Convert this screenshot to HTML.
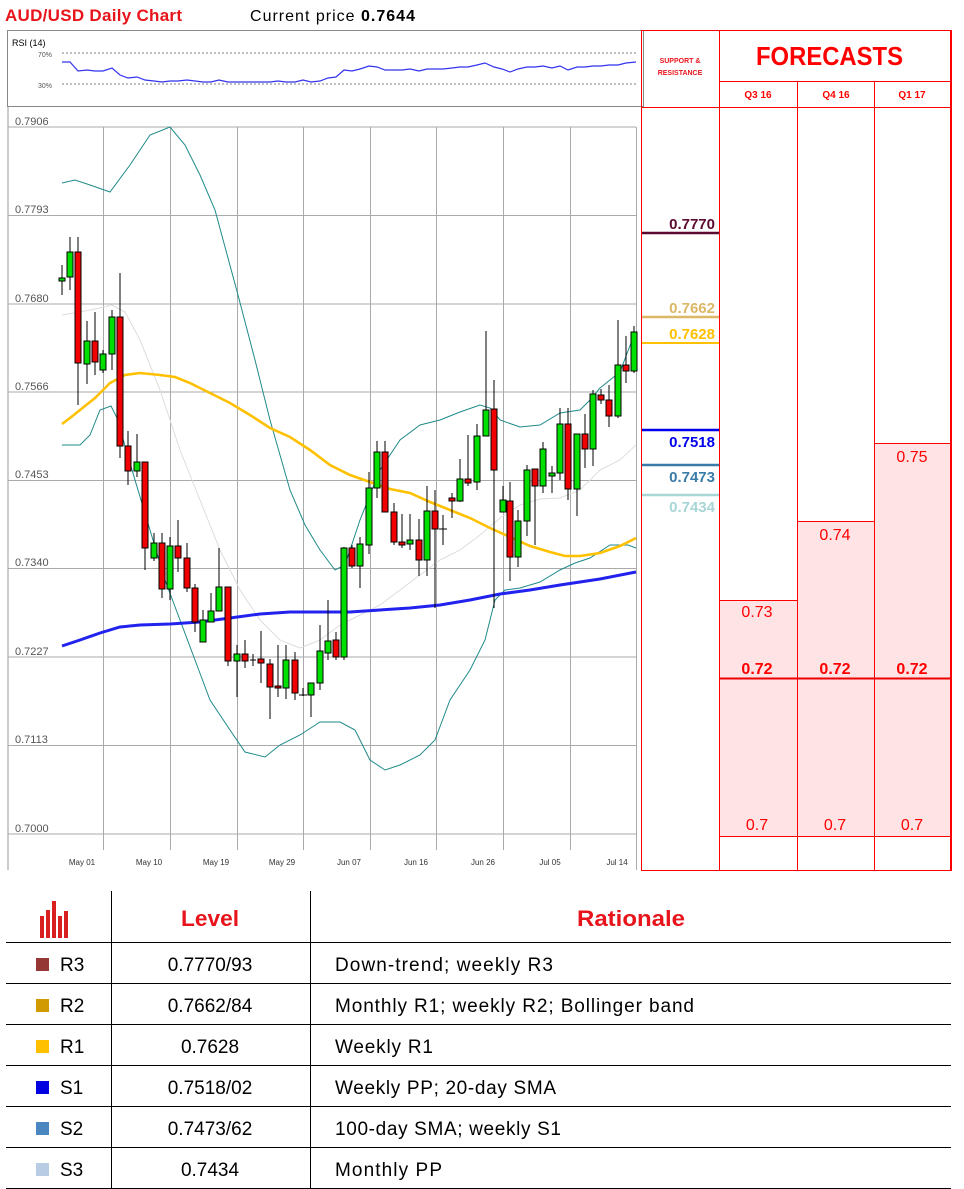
<!DOCTYPE html>
<html><head><meta charset="utf-8"><style>
html,body{margin:0;padding:0;background:#fff;width:964px;height:1189px;overflow:hidden}
svg{display:block}
text{font-family:"Liberation Sans",sans-serif}
</style></head><body>
<svg width="964" height="1189" viewBox="0 0 964 1189" xmlns="http://www.w3.org/2000/svg">
<text x="5" y="21" font-size="17" font-weight="bold" fill="#e8141b" textLength="177">AUD/USD Daily Chart</text>
<text x="250" y="21" font-size="16" fill="#000" textLength="165">Current price <tspan font-weight="bold">0.7644</tspan></text>

<rect x="7.5" y="30.5" width="636" height="76" fill="#fff" stroke="#888" stroke-width="1"/>
<text x="12" y="46" font-size="9" fill="#000">RSI (14)</text>
<text x="38" y="57" font-size="7" fill="#555">70%</text>
<text x="38" y="88" font-size="7" fill="#555">30%</text>
<line x1="62" y1="53" x2="636" y2="53" stroke="#555" stroke-dasharray="2,2" stroke-width="0.8"/>
<line x1="62" y1="84" x2="636" y2="84" stroke="#555" stroke-dasharray="2,2" stroke-width="0.8"/>
<polyline fill="none" stroke="#3333ee" stroke-width="1.2" points="62,62 70,62 78,71 87,70 95,71 103,71 112,68 120,75 128,78 137,77 145,80 154,81 162,82 170,81 178,81 187,80 195,81 203,82 211,82 219,80 228,82 237,82 245,82 253,82 261,82 270,82 278,81 286,82 295,82 303,80 311,82 320,81 328,78 336,77 344,70 352,71 360,69 369,66 377,67 385,70 394,70 402,70 410,69 419,71 427,69 435,69 443,69 452,68 460,67 468,67 477,65 485,63 494,67 502,69 510,72 518,69 527,67 535,67 543,66 552,68 560,66 568,70 577,67 585,67 593,66 601,66 609,65 618,65 626,63 636,62"/>

<line x1="8" y1="107" x2="8" y2="870" stroke="#ccc" stroke-width="2"/>
<g stroke="#aaa" stroke-width="1">
<line x1="8" y1="127" x2="636" y2="127"/><line x1="8" y1="215.5" x2="636" y2="215.5"/><line x1="8" y1="304" x2="636" y2="304"/><line x1="8" y1="392" x2="636" y2="392"/><line x1="8" y1="480.5" x2="636" y2="480.5"/><line x1="8" y1="568.5" x2="636" y2="568.5"/><line x1="8" y1="657" x2="636" y2="657"/><line x1="8" y1="745.5" x2="636" y2="745.5"/><line x1="8" y1="834" x2="636" y2="834"/>
<line x1="103.5" y1="127" x2="103.5" y2="850"/><line x1="170.5" y1="127" x2="170.5" y2="850"/><line x1="237.5" y1="127" x2="237.5" y2="850"/><line x1="303.5" y1="127" x2="303.5" y2="850"/><line x1="370.5" y1="127" x2="370.5" y2="850"/><line x1="436.5" y1="127" x2="436.5" y2="850"/><line x1="503.5" y1="127" x2="503.5" y2="850"/><line x1="570.5" y1="127" x2="570.5" y2="850"/><line x1="636.5" y1="127" x2="636.5" y2="870"/>
</g>
<g font-size="11" fill="#555">
<text x="15" y="125">0.7906</text><text x="15" y="213">0.7793</text><text x="15" y="302">0.7680</text><text x="15" y="390">0.7566</text><text x="15" y="478">0.7453</text><text x="15" y="566">0.7340</text><text x="15" y="655">0.7227</text><text x="15" y="743">0.7113</text><text x="15" y="832">0.7000</text>
</g>
<g font-size="8" fill="#333" text-anchor="middle">
<text x="82" y="865">May 01</text><text x="149" y="865">May 10</text><text x="216" y="865">May 19</text><text x="282" y="865">May 29</text><text x="349" y="865">Jun 07</text><text x="416" y="865">Jun 16</text><text x="483" y="865">Jun 26</text><text x="550" y="865">Jul 05</text><text x="617" y="865">Jul 14</text>
</g>

<polyline fill="none" stroke="#ddd" stroke-width="1" points="62,315 80,312 100,308 112,305 125,312 140,340 160,390 180,450 200,500 220,550 240,590 260,620 280,640 300,648 320,640 340,625 360,615 380,605 400,590 420,575 440,560 460,550 480,535 500,518 520,505 540,499 560,498 580,490 600,470 620,460 636,445"/>
<polyline fill="none" stroke="#1f8a8a" stroke-width="1" points="62,183 75,180 90,185 110,192 130,165 150,135 170,127 185,145 200,175 215,210 238,295 255,360 270,420 290,490 305,525 320,550 335,570 345,565 360,520 380,470 400,440 420,425 440,420 460,412 480,405 490,408 500,420 520,427 540,425 560,413 580,410 590,400 600,388 620,372 634,335"/>
<polyline fill="none" stroke="#1f8a8a" stroke-width="1" points="62,445 80,445 90,435 100,410 111,406 118,420 125,446 135,480 150,530 165,580 180,620 195,660 210,700 230,730 245,752 265,757 280,745 300,735 320,722 340,722 355,730 370,760 385,770 400,765 420,755 435,740 450,700 470,670 485,640 495,600 505,590 520,588 540,582 560,570 575,563 590,558 610,545 628,545 636,548"/>
<polyline fill="none" stroke="#ffc000" stroke-width="2.6" points="62,424 70,418 85,406 95,398 110,383 125,375 140,373 160,375 175,377 190,383 210,393 230,403 250,415 270,428 290,437 310,450 330,465 350,475 370,482 390,489 410,493 430,502 450,510 470,518 490,528 510,537 530,546 550,552 565,556 580,556 600,553 620,546 636,538"/>
<polyline fill="none" stroke="#2222ee" stroke-width="3" points="62,646 80,640 100,633 120,627 140,625 170,624 200,622 230,618 260,614 290,612 320,612 350,612 380,610 410,608 440,605 470,600 500,594 530,590 560,585 600,579 636,572"/>

<g stroke="#000" stroke-width="1">
<line x1="62" y1="265" x2="62" y2="295"/><rect x="59" y="278" width="6" height="3" fill="#00e000"/>
<line x1="70" y1="237" x2="70" y2="290"/><rect x="67" y="252" width="6" height="25" fill="#00e000"/>
<line x1="78" y1="237" x2="78" y2="405"/><rect x="75" y="252" width="6" height="111" fill="#f00000"/>
<line x1="87" y1="321" x2="87" y2="384"/><rect x="84" y="341" width="6" height="23" fill="#00e000"/>
<line x1="95" y1="312" x2="95" y2="375"/><rect x="92" y="341" width="6" height="21" fill="#f00000"/>
<line x1="103" y1="350" x2="103" y2="373"/><rect x="100" y="354" width="6" height="16" fill="#00e000"/>
<line x1="112" y1="310" x2="112" y2="370"/><rect x="109" y="317" width="6" height="37" fill="#00e000"/>
<line x1="120" y1="273" x2="120" y2="458"/><rect x="117" y="317" width="6" height="129" fill="#f00000"/>
<line x1="128" y1="431" x2="128" y2="485"/><rect x="125" y="446" width="6" height="25" fill="#f00000"/>
<line x1="137" y1="434" x2="137" y2="477"/><rect x="134" y="462" width="6" height="9" fill="#00e000"/>
<line x1="145" y1="462" x2="145" y2="570"/><rect x="142" y="462" width="6" height="86" fill="#f00000"/>
<line x1="154" y1="533" x2="154" y2="561"/><rect x="151" y="543" width="6" height="15" fill="#00e000"/>
<line x1="162" y1="533" x2="162" y2="598"/><rect x="159" y="543" width="6" height="46" fill="#f00000"/>
<line x1="170" y1="537" x2="170" y2="600"/><rect x="167" y="546" width="6" height="43" fill="#00e000"/>
<line x1="178" y1="520" x2="178" y2="572"/><rect x="175" y="546" width="6" height="12" fill="#f00000"/>
<line x1="187" y1="543" x2="187" y2="592"/><rect x="184" y="558" width="6" height="30" fill="#f00000"/>
<line x1="195" y1="584" x2="195" y2="632"/><rect x="192" y="588" width="6" height="34" fill="#f00000"/>
<line x1="203" y1="610" x2="203" y2="642"/><rect x="200" y="620" width="6" height="22" fill="#00e000"/>
<line x1="211" y1="593" x2="211" y2="622"/><rect x="208" y="611" width="6" height="11" fill="#00e000"/>
<line x1="219" y1="548" x2="219" y2="611"/><rect x="216" y="587" width="6" height="24" fill="#00e000"/>
<line x1="228" y1="587" x2="228" y2="666"/><rect x="225" y="587" width="6" height="74" fill="#f00000"/>
<line x1="237" y1="645" x2="237" y2="697"/><rect x="234" y="654" width="6" height="7" fill="#00e000"/>
<line x1="245" y1="640" x2="245" y2="668"/><rect x="242" y="654" width="6" height="7" fill="#f00000"/>
<line x1="253" y1="654" x2="253" y2="666"/><line x1="250" y1="660" x2="256" y2="660"/>
<line x1="261" y1="631" x2="261" y2="683"/><rect x="258" y="659" width="6" height="4" fill="#f00000"/>
<line x1="270" y1="659" x2="270" y2="719"/><rect x="267" y="664" width="6" height="23" fill="#f00000"/>
<line x1="278" y1="645" x2="278" y2="697"/><rect x="275" y="686" width="6" height="2" fill="#f00000"/>
<line x1="286" y1="645" x2="286" y2="699"/><rect x="283" y="660" width="6" height="28" fill="#00e000"/>
<line x1="295" y1="652" x2="295" y2="700"/><rect x="292" y="660" width="6" height="33" fill="#f00000"/>
<line x1="303" y1="688" x2="303" y2="696"/><line x1="299" y1="695" x2="307" y2="695"/>
<line x1="311" y1="683" x2="311" y2="717"/><rect x="308" y="683" width="6" height="12" fill="#00e000"/>
<line x1="320" y1="625" x2="320" y2="690"/><rect x="317" y="651" width="6" height="32" fill="#00e000"/>
<line x1="328" y1="600" x2="328" y2="660"/><rect x="325" y="641" width="6" height="12" fill="#00e000"/>
<line x1="336" y1="632" x2="336" y2="660"/><rect x="333" y="640" width="6" height="17" fill="#f00000"/>
<line x1="344" y1="547" x2="344" y2="660"/><rect x="341" y="548" width="6" height="109" fill="#00e000"/>
<line x1="352" y1="545" x2="352" y2="568"/><rect x="349" y="548" width="6" height="18" fill="#f00000"/>
<line x1="360" y1="537" x2="360" y2="588"/><rect x="357" y="544" width="6" height="22" fill="#00e000"/>
<line x1="369" y1="472" x2="369" y2="554"/><rect x="366" y="488" width="6" height="57" fill="#00e000"/>
<line x1="377" y1="441" x2="377" y2="498"/><rect x="374" y="452" width="6" height="36" fill="#00e000"/>
<line x1="385" y1="441" x2="385" y2="512"/><rect x="382" y="452" width="6" height="60" fill="#f00000"/>
<line x1="394" y1="503" x2="394" y2="545"/><rect x="391" y="512" width="6" height="30" fill="#f00000"/>
<line x1="402" y1="514" x2="402" y2="548"/><rect x="399" y="542" width="6" height="3" fill="#f00000"/>
<line x1="410" y1="514" x2="410" y2="550"/><rect x="407" y="540" width="6" height="4" fill="#00e000"/>
<line x1="419" y1="519" x2="419" y2="576"/><rect x="416" y="540" width="6" height="20" fill="#f00000"/>
<line x1="427" y1="486" x2="427" y2="576"/><rect x="424" y="511" width="6" height="49" fill="#00e000"/>
<line x1="435" y1="490" x2="435" y2="608"/><rect x="432" y="511" width="6" height="18" fill="#f00000"/>
<line x1="443" y1="515" x2="443" y2="545"/><line x1="439" y1="529" x2="447" y2="529"/>
<line x1="452" y1="493" x2="452" y2="518"/><rect x="449" y="498" width="6" height="3" fill="#f00000"/>
<line x1="460" y1="459" x2="460" y2="502"/><rect x="457" y="479" width="6" height="22" fill="#00e000"/>
<line x1="468" y1="435" x2="468" y2="486"/><rect x="465" y="479" width="6" height="4" fill="#f00000"/>
<line x1="477" y1="424" x2="477" y2="490"/><rect x="474" y="436" width="6" height="46" fill="#00e000"/>
<line x1="486" y1="331" x2="486" y2="436"/><rect x="483" y="410" width="6" height="26" fill="#00e000"/>
<line x1="494" y1="380" x2="494" y2="608"/><rect x="491" y="409" width="6" height="61" fill="#f00000"/>
<line x1="503" y1="486" x2="503" y2="512"/><rect x="500" y="500" width="6" height="12" fill="#00e000"/>
<line x1="510" y1="482" x2="510" y2="581"/><rect x="507" y="501" width="6" height="56" fill="#f00000"/>
<line x1="518" y1="510" x2="518" y2="567"/><rect x="515" y="521" width="6" height="36" fill="#00e000"/>
<line x1="527" y1="465" x2="527" y2="536"/><rect x="524" y="470" width="6" height="51" fill="#00e000"/>
<line x1="535" y1="469" x2="535" y2="545"/><rect x="532" y="469" width="6" height="17" fill="#f00000"/>
<line x1="543" y1="442" x2="543" y2="493"/><rect x="540" y="449" width="6" height="37" fill="#00e000"/>
<line x1="552" y1="466" x2="552" y2="493"/><rect x="549" y="473" width="6" height="3" fill="#00e000"/>
<line x1="560" y1="408" x2="560" y2="480"/><rect x="557" y="424" width="6" height="49" fill="#00e000"/>
<line x1="568" y1="408" x2="568" y2="500"/><rect x="565" y="424" width="6" height="65" fill="#f00000"/>
<line x1="577" y1="434" x2="577" y2="516"/><rect x="574" y="434" width="6" height="55" fill="#00e000"/>
<line x1="585" y1="414" x2="585" y2="468"/><rect x="582" y="434" width="6" height="15" fill="#f00000"/>
<line x1="593" y1="390" x2="593" y2="466"/><rect x="590" y="394" width="6" height="55" fill="#00e000"/>
<line x1="601" y1="389" x2="601" y2="404"/><rect x="598" y="395" width="6" height="5" fill="#f00000"/>
<line x1="609" y1="385" x2="609" y2="427"/><rect x="606" y="400" width="6" height="16" fill="#f00000"/>
<line x1="618" y1="320" x2="618" y2="418"/><rect x="615" y="365" width="6" height="51" fill="#00e000"/>
<line x1="626" y1="336" x2="626" y2="383"/><rect x="623" y="365" width="6" height="6" fill="#f00000"/>
<line x1="634" y1="326" x2="634" y2="373"/><rect x="631" y="332" width="6" height="39" fill="#00e000"/>
</g>

<rect x="719" y="600" width="78" height="236" fill="#ffe3e5"/>
<rect x="797" y="521" width="77" height="315" fill="#ffe3e5"/>
<rect x="874" y="443" width="77" height="393" fill="#ffe3e5"/>
<g stroke="#ff0000" stroke-width="1" fill="none">
<line x1="641.5" y1="30" x2="641.5" y2="870"/>
<line x1="719.5" y1="30" x2="719.5" y2="870"/>
<line x1="797.5" y1="81" x2="797.5" y2="870"/>
<line x1="874.5" y1="81" x2="874.5" y2="870"/>
<line x1="641" y1="30.5" x2="951" y2="30.5"/>
<line x1="719" y1="81.5" x2="951" y2="81.5"/>
<line x1="641" y1="107.5" x2="951" y2="107.5"/>
<line x1="719" y1="600.5" x2="797" y2="600.5"/>
<line x1="797" y1="521.5" x2="874" y2="521.5"/>
<line x1="874" y1="443.5" x2="951" y2="443.5"/>
<line x1="719" y1="836.5" x2="951" y2="836.5"/>
<line x1="641" y1="870.5" x2="951" y2="870.5"/>
</g>
<line x1="951" y1="30" x2="951" y2="871" stroke="#ff0000" stroke-width="2"/>
<line x1="719" y1="678.5" x2="951" y2="678.5" stroke="#ee0000" stroke-width="2"/>
<text x="680" y="63" font-size="7" font-weight="bold" fill="#e8141b" text-anchor="middle">SUPPORT &amp;</text>
<text x="680" y="75" font-size="7" font-weight="bold" fill="#e8141b" text-anchor="middle">RESISTANCE</text>
<text x="756" y="65" font-size="26" font-weight="bold" fill="#ff0000" textLength="147" lengthAdjust="spacingAndGlyphs">FORECASTS</text>
<g font-size="10" font-weight="bold" fill="#ff0000" text-anchor="middle">
<text x="758" y="98">Q3 16</text><text x="836" y="98">Q4 16</text><text x="912" y="98">Q1 17</text>
</g>
<g font-size="16" fill="#ff0000" text-anchor="middle">
<text x="757" y="617">0.73</text><text x="835" y="540">0.74</text><text x="912" y="462">0.75</text>
<text x="757" y="830">0.7</text><text x="835" y="830">0.7</text><text x="912" y="830">0.7</text>
</g>
<g font-size="16" font-weight="bold" fill="#ff0000" text-anchor="middle">
<text x="757" y="674">0.72</text><text x="835" y="674">0.72</text><text x="912" y="674">0.72</text>
</g>
<line x1="642" y1="233" x2="719" y2="233" stroke="#5c0a30" stroke-width="2.5"/>
<line x1="642" y1="317" x2="719" y2="317" stroke="#dcb765" stroke-width="2.5"/>
<line x1="642" y1="343" x2="719" y2="343" stroke="#ffc000" stroke-width="2"/>
<line x1="642" y1="430" x2="719" y2="430" stroke="#0000ee" stroke-width="2.5"/>
<line x1="642" y1="465" x2="719" y2="465" stroke="#3a7ba8" stroke-width="2.5"/>
<line x1="642" y1="495" x2="719" y2="495" stroke="#a8d6d6" stroke-width="2.5"/>
<g font-size="15" font-weight="bold" text-anchor="end">
<text x="715" y="229" fill="#5c0a30">0.7770</text>
<text x="715" y="313" fill="#dcb765">0.7662</text>
<text x="715" y="339" fill="#ffc000">0.7628</text>
<text x="715" y="447" fill="#0000ee">0.7518</text>
<text x="715" y="482" fill="#3a7ba8">0.7473</text>
<text x="715" y="512" fill="#a8d6d6">0.7434</text>
</g>

<g stroke="#000" stroke-width="1">
<line x1="111.5" y1="891" x2="111.5" y2="1189"/>
<line x1="310.5" y1="891" x2="310.5" y2="1189"/>
<line x1="6" y1="942.5" x2="951" y2="942.5"/>
<line x1="6" y1="983.5" x2="951" y2="983.5"/>
<line x1="6" y1="1024.5" x2="951" y2="1024.5"/>
<line x1="6" y1="1065.5" x2="951" y2="1065.5"/>
<line x1="6" y1="1106.5" x2="951" y2="1106.5"/>
<line x1="6" y1="1147.5" x2="951" y2="1147.5"/>
<line x1="6" y1="1188.5" x2="951" y2="1188.5"/>
</g>
<g fill="#d92020">
<rect x="40" y="916" width="4" height="22"/><rect x="46" y="910" width="4" height="28"/><rect x="52" y="901" width="4" height="37"/><rect x="58" y="916" width="4" height="22"/><rect x="64" y="911" width="4" height="27"/>
</g>
<text x="181" y="926" font-size="22" font-weight="bold" fill="#e8141b" textLength="58" lengthAdjust="spacingAndGlyphs">Level</text>
<text x="577" y="926" font-size="22" font-weight="bold" fill="#e8141b" textLength="108" lengthAdjust="spacingAndGlyphs">Rationale</text>
<rect x="36" y="958" width="13" height="13" fill="#953735"/>
<rect x="36" y="999" width="13" height="13" fill="#d09a00"/>
<rect x="36" y="1040" width="13" height="13" fill="#ffc000"/>
<rect x="36" y="1081" width="13" height="13" fill="#0000e0"/>
<rect x="36" y="1122" width="13" height="13" fill="#4a86c0"/>
<rect x="36" y="1163" width="13" height="13" fill="#b8cce4"/>
<g font-size="19" fill="#000">
<text x="60" y="971">R3</text><text x="60" y="1012">R2</text><text x="60" y="1053">R1</text><text x="60" y="1094">S1</text><text x="60" y="1135">S2</text><text x="60" y="1176">S3</text>
</g>
<g font-size="19" fill="#000" text-anchor="middle">
<text x="210" y="971">0.7770/93</text><text x="210" y="1012">0.7662/84</text><text x="210" y="1053">0.7628</text><text x="210" y="1094">0.7518/02</text><text x="210" y="1135">0.7473/62</text><text x="210" y="1176">0.7434</text>
</g>
<g font-size="19" fill="#000" lengthAdjust="spacingAndGlyphs">
<text x="335" y="971" textLength="218">Down-trend; weekly R3</text><text x="335" y="1012" textLength="359">Monthly R1; weekly R2; Bollinger band</text><text x="335" y="1053" textLength="98">Weekly R1</text><text x="335" y="1094" textLength="221">Weekly PP; 20-day SMA</text><text x="335" y="1135" textLength="226">100-day SMA; weekly S1</text><text x="335" y="1176" textLength="107">Monthly PP</text>
</g>
</svg>
</body></html>
